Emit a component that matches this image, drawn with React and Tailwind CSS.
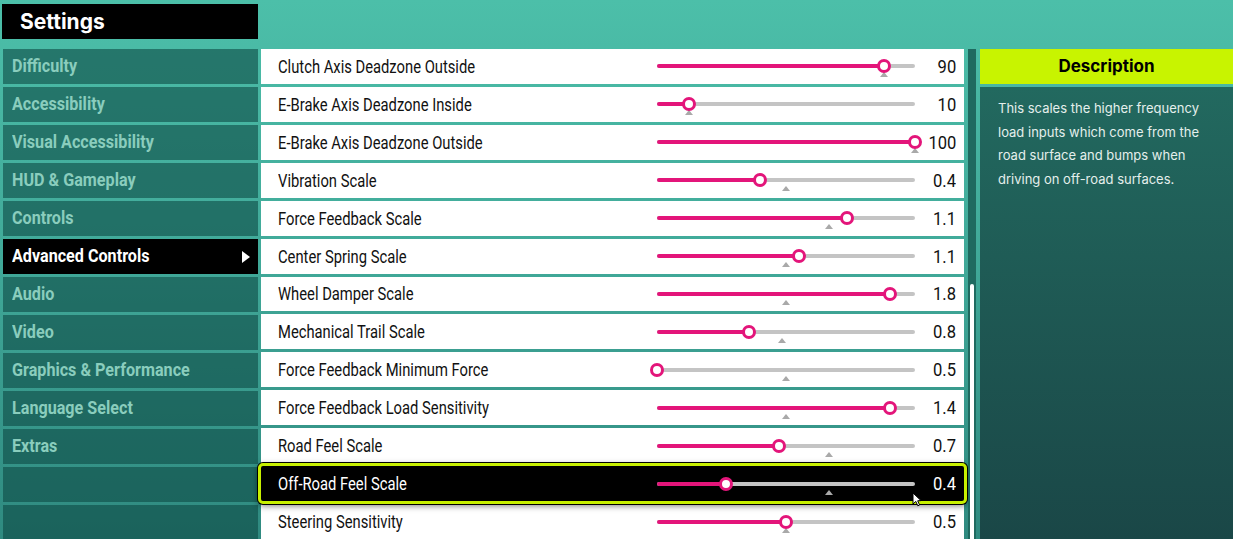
const menu = [
    "Difficulty",
    "Accessibility",
    "Visual Accessibility",
    "HUD & Gameplay",
    "Controls",
    "Advanced Controls",
    "Audio",
    "Video",
    "Graphics & Performance",
    "Language Select",
    "Extras",
    "",
    "",
];

const rows = [
    { label: "Clutch Axis Deadzone Outside", value: "90", pos: 0.879, mark: 0.879 },
    { label: "E-Brake Axis Deadzone Inside", value: "10", pos: 0.125, mark: 0.125 },
    { label: "E-Brake Axis Deadzone Outside", value: "100", pos: 1, mark: 1 },
    { label: "Vibration Scale", value: "0.4", pos: 0.4, mark: 0.5 },
    { label: "Force Feedback Scale", value: "1.1", pos: 0.735, mark: 0.665 },
    { label: "Center Spring Scale", value: "1.1", pos: 0.549, mark: 0.5 },
    { label: "Wheel Damper Scale", value: "1.8", pos: 0.903, mark: 0.5 },
    { label: "Mechanical Trail Scale", value: "0.8", pos: 0.358, mark: 0.486 },
    { label: "Force Feedback Minimum Force", value: "0.5", pos: 0, mark: 0.5 },
    { label: "Force Feedback Load Sensitivity", value: "1.4", pos: 0.903, mark: 0.5 },
    { label: "Road Feel Scale", value: "0.7", pos: 0.471, mark: 0.665 },
    { label: "Off-Road Feel Scale", value: "0.4", pos: 0.268, mark: 0.665, active: true },
    { label: "Steering Sensitivity", value: "0.5", pos: 0.5, mark: 0.5 },
];

// game UI uses a condensed face; Roboto squeezed is the closest we have
const narrow = { fontFamily: '"Roboto", sans-serif' };

function Slider({ pos, mark }) {
    return (
        <div className="relative h-[20px] w-[258px] shrink-0">
            <div className="absolute left-0 right-0 top-[8px] h-[4px] rounded-full bg-[#c4c4c4]" />
            <div
                className="absolute left-0 top-[8px] h-[4px] rounded-full bg-[#e3157a]"
                style={{ width: `${pos * 100}%` }}
            />
            <div
                className="absolute top-[16px] h-0 w-0 -translate-x-1/2 border-x-[4px] border-b-[5px] border-x-transparent border-b-[#a9a9a9]"
                style={{ left: `${mark * 100}%` }}
            />
            <div
                className="absolute top-[3px] h-[14px] w-[14px] -translate-x-1/2 rounded-full border-[3px] border-[#e3157a] bg-white"
                style={{ left: `${pos * 100}%` }}
            />
        </div>
    );
}

function Label({ children }) {
    return (
        <span className="w-[379px] shrink-0 text-[18px]" style={narrow}>
            <span className="inline-block origin-left scale-x-[0.82] whitespace-nowrap">{children}</span>
        </span>
    );
}

function Value({ children }) {
    return (
        <span className="flex-1 text-right text-[18px]" style={narrow}>
            <span className="inline-block origin-right scale-x-[0.92]">{children}</span>
        </span>
    );
}

function SettingRow({ row }) {
    if (row.active) {
        return (
            <div className="relative -mx-[3px] -my-[3px] flex h-[41px] items-center rounded-[5px] border-[3px] border-[#c7f000] bg-black pl-[17px] pr-[8px] text-white shadow-[0_0_0_1px_#000,0_2px_6px_rgba(0,0,0,0.5)]">
                <Label>{row.label}</Label>
                <Slider pos={row.pos} mark={row.mark} />
                <Value>{row.value}</Value>
                <svg
                    className="absolute left-[651px] top-[26px]"
                    width="10"
                    height="15"
                    viewBox="0 0 10 15"
                >
                    <path d="M1 1 L1 12 L3.8 9.4 L5.8 13.8 L7.6 13 L5.7 8.8 L9 8.6 Z" fill="white" stroke="black" strokeWidth="1" />
                </svg>
            </div>
        );
    }

    return (
        <div className="flex h-[35px] items-center bg-white pl-[17px] pr-[8px] text-[#111]">
            <Label>{row.label}</Label>
            <Slider pos={row.pos} mark={row.mark} />
            <Value>{row.value}</Value>
        </div>
    );
}

export default function App() {
    return (
        <div
            className="flex h-[539px] w-full flex-col overflow-hidden bg-gradient-to-b from-[#4cbfa9] via-[#40a898] to-[#2f8a80]"
            style={{ fontFamily: "Inter, sans-serif" }}
        >
            <div className="ml-[2px] mt-[4px] flex h-[35px] w-[256px] items-center bg-black pl-[18px]">
                <h1 className="text-[21px] font-bold text-white">Settings</h1>
            </div>

            <div className="mt-[10px] flex min-h-0 flex-1">
                <nav className="ml-[3px] flex w-[255px] shrink-0 flex-col gap-[3px]">
                    {menu.map((item, i) =>
                        item === "Advanced Controls" ? (
                            <div
                                key={i}
                                className="flex h-[35px] shrink-0 items-center justify-between bg-black pl-[9px] pr-[8px] text-[19px] font-bold text-white"
                                style={narrow}
                            >
                                <span className="inline-block origin-left scale-x-[0.85] whitespace-nowrap">{item}</span>
                                <span className="h-0 w-0 border-y-[6px] border-l-[8px] border-y-transparent border-l-white" />
                            </div>
                        ) : (
                            <div
                                key={i}
                                className="flex h-[35px] shrink-0 items-center bg-[#0e4a44]/60 pl-[9px] text-[19px] font-bold text-[#8acdbd]"
                                style={narrow}
                            >
                                <span className="inline-block origin-left scale-x-[0.85] whitespace-nowrap">{item}</span>
                            </div>
                        )
                    )}
                </nav>

                <div className="ml-[3px] flex w-[703px] shrink-0 flex-col gap-[3px]">
                    {rows.map((row) => (
                        <SettingRow key={row.label} row={row} />
                    ))}
                </div>

                <div className="relative ml-[4px] w-[8px] shrink-0 bg-[#1f6a60]">
                    <div className="absolute bottom-0 left-[2px] top-[235px] w-[4px] rounded-t-full bg-white" />
                </div>

                <aside className="ml-[4px] flex flex-1 flex-col gap-[3px]">
                    <div className="flex h-[35px] shrink-0 items-center justify-center bg-[#c8f400] text-[17px] font-bold text-black">
                        Description
                    </div>
                    <div className="flex-1 bg-gradient-to-b from-[#22695f] to-[#1a4747] px-[18px] pt-[10px] text-[13px] leading-[23.5px] text-[#e4efec]">
                        This scales the higher frequency load inputs which come from the road surface and bumps when driving on off-road surfaces.
                    </div>
                </aside>
            </div>
        </div>
    );
}
